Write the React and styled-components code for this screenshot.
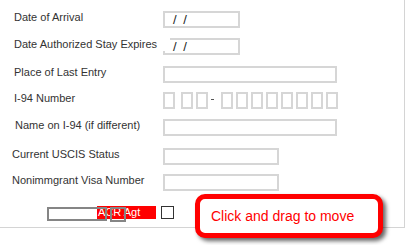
import React from "react";
import styled, { createGlobalStyle } from "styled-components";

const GlobalStyle = createGlobalStyle`
  html, body {
    margin: 0;
    padding: 0;
    background: #fff;
  }
  body {
    font-family: "Liberation Sans", Arial, sans-serif;
  }
`;

const Page = styled.div`
  position: relative;
  width: 413px;
  height: 245px;
  overflow: hidden;
  background: #fff;
`;

const Panel = styled.div`
  box-sizing: border-box;
  width: 405px;
  height: 228px;
  padding-top: 11px;
  border-right: 1px solid #d4d4d4;
  border-bottom: 1px solid #d4d4d4;
  display: flex;
  flex-direction: column;
`;

const Row = styled.div`
  display: flex;
  align-items: flex-start;
  height: ${(p) => p.$h || 17}px;
  margin-top: ${(p) => p.$mt || 0}px;
  position: relative;
`;

const Label = styled.div`
  box-sizing: border-box;
  flex: none;
  width: ${(p) => (p.$cover ? 170 : 163)}px;
  margin-right: ${(p) => (p.$cover ? -7 : 0)}px;
  padding-left: ${(p) => p.$indent || 14}px;
  font-size: 11px;
  line-height: 13px;
  color: #333;
  white-space: nowrap;
  ${(p) =>
    p.$cover &&
    `
    position: relative;
    z-index: 1;
    background: #fff;
  `}
`;

const TextBox = styled.div`
  box-sizing: border-box;
  flex: none;
  width: ${(p) => p.$w}px;
  height: 17px;
  border: 2px solid #d6d6d6;
  padding-left: 8px;
  font-size: 13px;
  line-height: 13px;
  color: #222;
  word-spacing: 3px;
`;

const Boxes = styled.div`
  display: flex;
  align-items: flex-start;
`;

const Cell = styled.div`
  box-sizing: border-box;
  flex: none;
  width: 12px;
  height: 17px;
  border: 2px solid #d6d6d6;
  margin-left: ${(p) => p.$gap || 0}px;
`;

const Dash = styled.div`
  flex: none;
  width: 3px;
  height: 1px;
  margin: 7px 7px 0 3px;
  background: #555;
`;

const CheckRow = styled(Row)`
  align-items: flex-start;
`;

const Outline = styled.div`
  position: absolute;
  z-index: 1;
  box-sizing: border-box;
  left: ${(p) => p.$x}px;
  top: 1px;
  width: ${(p) => p.$w}px;
  height: ${(p) => p.$h}px;
  border: 2px solid #858585;
`;

const RedTag = styled.div`
  box-sizing: border-box;
  flex: none;
  margin-left: 97px;
  width: 59px;
  height: 13px;
  padding-left: 1px;
  background: #ff0000;
  color: #fff;
  font-size: 11px;
  line-height: 13px;
  white-space: nowrap;
`;

const Check = styled.div`
  box-sizing: border-box;
  flex: none;
  margin-left: 5px;
  width: 13px;
  height: 13px;
  border: 1px solid #333;
  background: #fff;
`;

const Callout = styled.div`
  position: absolute;
  left: 195px;
  top: 194px;
  box-sizing: border-box;
  width: 188px;
  height: 44px;
  border: 5px solid #ff0000;
  border-radius: 10px;
  background: #fff;
  box-shadow: 3px 3px 4px rgba(0, 0, 0, 0.6);
  display: flex;
  align-items: center;
  padding-left: 11px;
  color: #ff0000;
  font-size: 14px;
  white-space: nowrap;
`;

const I94Boxes = () => (
  <Boxes>
    <Cell />
    <Cell $gap={6} />
    <Cell $gap={3} />
    <Dash />
    {Array.from({ length: 8 }).map((_, i) => (
      <Cell key={i} $gap={i === 0 ? 0 : 3} />
    ))}
  </Boxes>
);

export default function App() {
  return (
    <Page>
      <GlobalStyle />
      <Panel>
        <Row $mt={0}>
          <Label>Date of Arrival</Label>
          <TextBox $w={77}>/ /</TextBox>
        </Row>
        <Row $mt={10}>
          <Label $cover>Date Authorized Stay Expires</Label>
          <TextBox $w={77}>/ /</TextBox>
        </Row>
        <Row $mt={11}>
          <Label>Place of Last Entry</Label>
          <TextBox $w={174} />
        </Row>
        <Row $mt={9}>
          <Label>I-94 Number</Label>
          <I94Boxes />
        </Row>
        <Row $mt={10}>
          <Label $indent={15}>Name on I-94 (if different)</Label>
          <TextBox $w={174} />
        </Row>
        <Row $mt={12}>
          <Label $indent={12}>Current USCIS Status</Label>
          <TextBox $w={116} />
        </Row>
        <Row $mt={9}>
          <Label $indent={12}>Nonimmgrant Visa Number</Label>
          <TextBox $w={116} />
        </Row>
        <CheckRow $mt={15} $h={14}>
          <Outline $x={47} $w={60} $h={14} />
          <Outline $x={110} $w={16} $h={15} />
          <RedTag>ACR Agt</RedTag>
          <Check />
        </CheckRow>
      </Panel>
      <Callout>Click and drag to move</Callout>
    </Page>
  );
}
